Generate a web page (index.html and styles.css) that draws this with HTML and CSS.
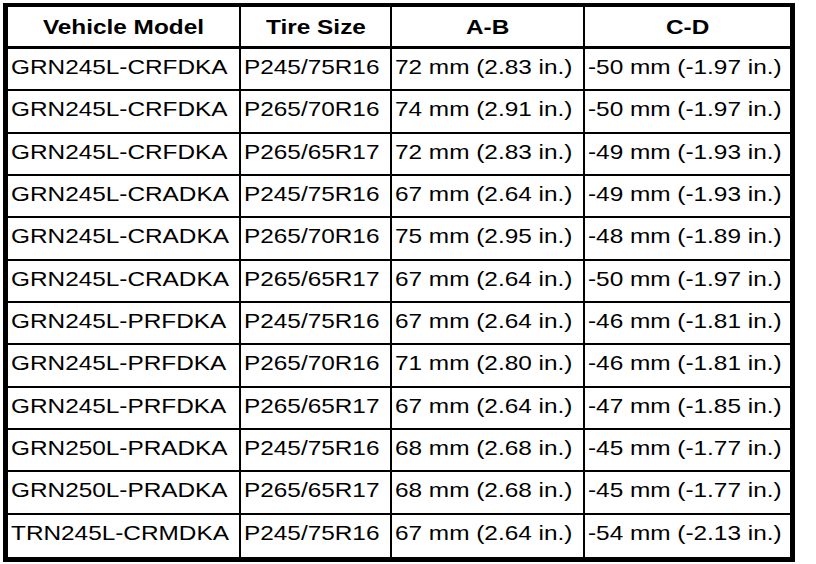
FILE: index.html
```html
<!DOCTYPE html>
<html lang="en">
<head>
<meta charset="UTF-8">
<meta name="viewport" content="width=device-width, initial-scale=1.0">
<title>Vehicle Dimensions</title>
<link rel="stylesheet" href="styles.css">
</head>
<body>

<table class="spec">
  <colgroup>
    <col class="c-model">
    <col class="c-tire">
    <col class="c-ab">
    <col class="c-cd">
  </colgroup>
  <thead>
    <tr>
      <th><span>Vehicle Model</span></th>
      <th><span>Tire Size</span></th>
      <th><span>A-B</span></th>
      <th><span>C-D</span></th>
    </tr>
  </thead>
  <tbody>
    <tr><td><span>GRN245L-CRFDKA</span></td><td><span>P245/75R16</span></td><td><span>72 mm (2.83 in.)</span></td><td><span>-50 mm (-1.97 in.)</span></td></tr>
    <tr><td><span>GRN245L-CRFDKA</span></td><td><span>P265/70R16</span></td><td><span>74 mm (2.91 in.)</span></td><td><span>-50 mm (-1.97 in.)</span></td></tr>
    <tr><td><span>GRN245L-CRFDKA</span></td><td><span>P265/65R17</span></td><td><span>72 mm (2.83 in.)</span></td><td><span>-49 mm (-1.93 in.)</span></td></tr>
    <tr><td><span>GRN245L-CRADKA</span></td><td><span>P245/75R16</span></td><td><span>67 mm (2.64 in.)</span></td><td><span>-49 mm (-1.93 in.)</span></td></tr>
    <tr><td><span>GRN245L-CRADKA</span></td><td><span>P265/70R16</span></td><td><span>75 mm (2.95 in.)</span></td><td><span>-48 mm (-1.89 in.)</span></td></tr>
    <tr><td><span>GRN245L-CRADKA</span></td><td><span>P265/65R17</span></td><td><span>67 mm (2.64 in.)</span></td><td><span>-50 mm (-1.97 in.)</span></td></tr>
    <tr><td><span>GRN245L-PRFDKA</span></td><td><span>P245/75R16</span></td><td><span>67 mm (2.64 in.)</span></td><td><span>-46 mm (-1.81 in.)</span></td></tr>
    <tr><td><span>GRN245L-PRFDKA</span></td><td><span>P265/70R16</span></td><td><span>71 mm (2.80 in.)</span></td><td><span>-46 mm (-1.81 in.)</span></td></tr>
    <tr><td><span>GRN245L-PRFDKA</span></td><td><span>P265/65R17</span></td><td><span>67 mm (2.64 in.)</span></td><td><span>-47 mm (-1.85 in.)</span></td></tr>
    <tr><td><span>GRN250L-PRADKA</span></td><td><span>P245/75R16</span></td><td><span>68 mm (2.68 in.)</span></td><td><span>-45 mm (-1.77 in.)</span></td></tr>
    <tr><td><span>GRN250L-PRADKA</span></td><td><span>P265/65R17</span></td><td><span>68 mm (2.68 in.)</span></td><td><span>-45 mm (-1.77 in.)</span></td></tr>
    <tr><td><span>TRN245L-CRMDKA</span></td><td><span>P245/75R16</span></td><td><span>67 mm (2.64 in.)</span></td><td><span>-54 mm (-2.13 in.)</span></td></tr>
  </tbody>
</table>

</body>
</html>
```
FILE: styles.css
```css
  body {
    margin: 0;
    padding: 3px;
    background-color: #fff;
    color: #000;
    font-family: "Liberation Sans", Arial, sans-serif;
  }

  .spec {
    width: 792px;
    box-sizing: border-box;
    table-layout: fixed;
    border-collapse: separate;
    border-spacing: 0;
    border-style: solid;
    border-color: #000;
    border-width: 4px 5px 5px 5px;
  }
  .c-model { width: 233px; }
  .c-tire { width: 151px; }
  .c-ab { width: 193px; }
  .c-cd { width: 205px; }

  .spec th,
  .spec td {
    box-sizing: border-box;
    padding: 0;
    border-right: 2px solid #000;
    border-bottom: 2px solid #000;
    white-space: nowrap;
  }
  .spec th:last-child,
  .spec td:last-child {
    border-right: none;
  }

  .spec th {
    height: 42px;
    border-bottom-width: 3px;
    font-size: 21px;
    font-weight: bold;
    text-align: center;
    vertical-align: middle;
  }
  .spec th span {
    display: inline-block;
    transform: scaleX(1.16);
    transform-origin: center;
  }

  .spec td {
    height: 42.33px;
    padding: 7px 0 0 3px;
    font-size: 21px;
    line-height: 21px;
    text-align: left;
    vertical-align: top;
  }
  .spec tbody tr:last-child td {
    border-bottom: none;
  }
  .spec td span {
    display: inline-block;
    transform: scaleX(1.16);
    transform-origin: left;
  }
```
